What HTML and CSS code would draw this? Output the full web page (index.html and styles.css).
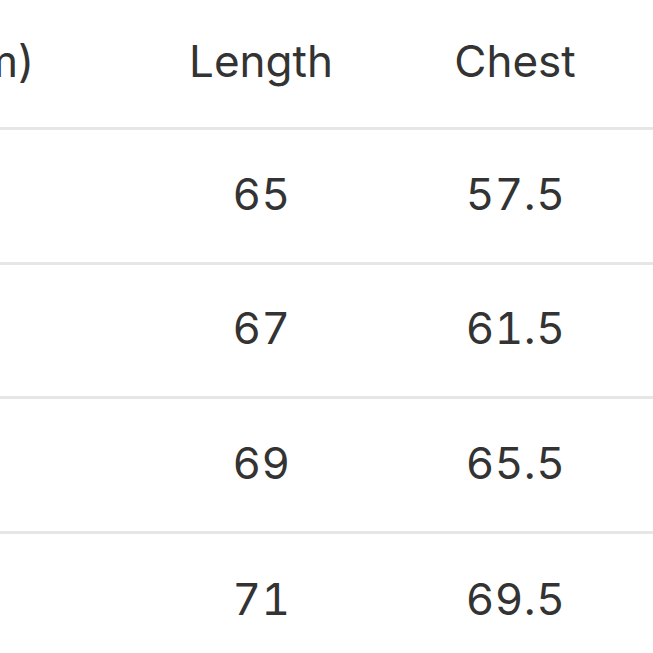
FILE: index.html
```html
<!DOCTYPE html>
<html>
<head>
<meta charset="utf-8">
<link rel="stylesheet" href="styles.css">
</head>
<body>
<div class="table">
  <div class="row head">
    <div class="cell first">Size (cm)</div>
    <div class="cell">Length</div>
    <div class="cell">Chest</div>
  </div>
  <div class="row">
    <div class="cell first"></div>
    <div class="cell num">65</div>
    <div class="cell num">57.5</div>
  </div>
  <div class="row">
    <div class="cell first"></div>
    <div class="cell num">67</div>
    <div class="cell num">61.5</div>
  </div>
  <div class="row">
    <div class="cell first"></div>
    <div class="cell num">69</div>
    <div class="cell num">65.5</div>
  </div>
  <div class="row last">
    <div class="cell first"></div>
    <div class="cell num">71</div>
    <div class="cell num">69.5</div>
  </div>
</div>
</body>
</html>
```
FILE: styles.css
```css
html, body {
  margin: 0;
  padding: 0;
  background: #ffffff;
  overflow: hidden;
  width: 653px;
  height: 653px;
}
.table {
  margin-left: -200px;
  width: 1000px;
  font-family: Inter, "Noto Sans", sans-serif;
  font-size: 44px;
  color: #333333;
}
.row {
  display: flex;
  align-items: center;
  box-sizing: border-box;
  height: 134.5px;
  padding-bottom: 4px;
  border-bottom: 3px solid #e6e6e6;
}
.row.head {
  height: 130px;
  padding-bottom: 6px;
}
.row.last {
  border-bottom: none;
}
.cell {
  width: 254px;
  text-align: center;
  flex: none;
}
.cell.num {
  font-variant-numeric: tabular-nums;
  letter-spacing: 0.5px;
  text-indent: 1px;
}
.cell.first {
  width: 334px;
  text-align: right;
  padding-right: 100px;
  box-sizing: border-box;
}
```
